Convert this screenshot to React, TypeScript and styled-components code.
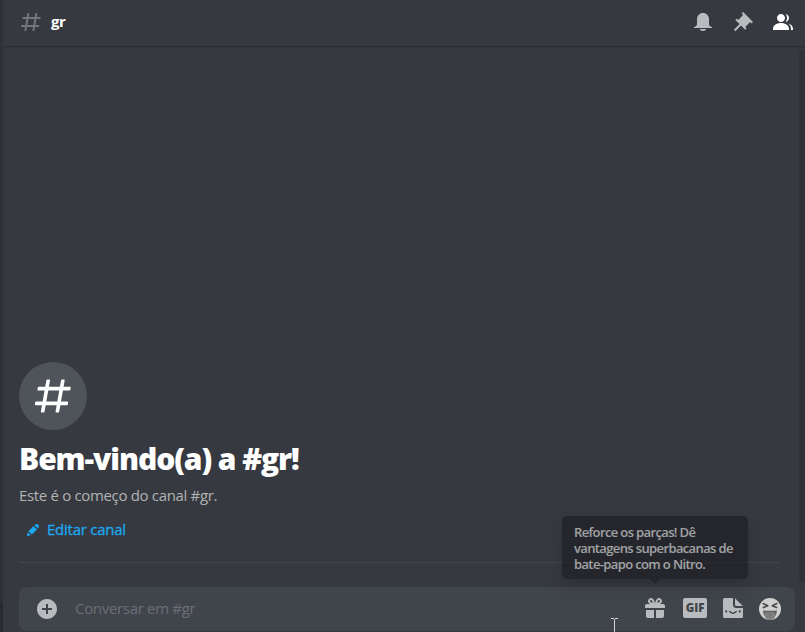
import React from "react";
import styled, { createGlobalStyle } from "styled-components";

const GlobalStyle = createGlobalStyle`
  * { box-sizing: border-box; }
  html, body, #root { height: 100%; margin: 0; }
  body { overflow: hidden; background: #36393f; font-family: "Open Sans", "Noto Sans", sans-serif; }
`;

const Window = styled.div`
  display: grid;
  grid-template-columns: 3px 1fr;
  width: 805px;
  height: 632px;
  overflow: hidden;
`;

const Sidebar = styled.aside`
  display: grid;
  grid-template-rows: 602px 1fr;
  background: #2f3136;
`;

const UserPanel = styled.div`
  grid-row: 2;
  background: #292b2f;
`;

const Channel = styled.main`
  display: flex;
  flex-direction: column;
  min-width: 0;
  background: #36393f;
`;

const Header = styled.header`
  display: flex;
  align-items: center;
  flex: 0 0 48px;
  padding: 0 10px 4px 16px;
  border-bottom: 1px solid #33363b;
  box-shadow: inset 0 -1px 0 #2b2d31;
`;

const ChannelName = styled.h1`
  flex: 1;
  margin: -2px 0 0 8px;
  color: #fff;
  font-size: 15px;
  line-height: 20px;
  font-weight: 700;
  letter-spacing: -0.4px;
`;

const Toolbar = styled.div`
  display: flex;
  gap: 16px;
`;

const Icon = styled.svg<{ $size?: number; $color?: string }>`
  display: block;
  flex: none;
  width: ${(p) => p.$size ?? 24}px;
  height: ${(p) => p.$size ?? 24}px;
  color: ${(p) => p.$color ?? "#b9bbbe"};
  fill: currentColor;
`;

const Body = styled.section`
  display: grid;
  grid-template-columns: 1fr 6px;
  height: 539px;
  flex: none;
`;

const ScrollTrack = styled.div`
  height: 533px;
  margin-top: 2px;
  border-radius: 4px 0 0 4px;
  background: #2f3237;
`;

const Welcome = styled.div`
  display: flex;
  flex-direction: column;
  justify-content: flex-end;
  align-items: flex-start;
  margin: 0 20px 24px 16px;
  border-bottom: 1px solid #42454a;
`;

const HashBadge = styled.div`
  display: grid;
  place-items: center;
  width: 68px;
  height: 68px;
  border-radius: 50%;
  background: #4f545a;
`;

const Title = styled.h2`
  margin: 9px 0 0;
  height: 40px;
  color: #fff;
  font-size: 30px;
  line-height: 40px;
  font-weight: 800;
  letter-spacing: -1.08px;
  white-space: nowrap;
`;

const Description = styled.p`
  margin: 6px 0 0;
  height: 20px;
  color: #b2b3b5;
  font-size: 15px;
  line-height: 20px;
  letter-spacing: -0.33px;
  white-space: nowrap;
`;

const EditButton = styled.button`
  display: flex;
  align-items: center;
  gap: 6px;
  height: 32px;
  margin: 9px 0 16px;
  padding: 0 0 0 6px;
  border: 0;
  background: none;
  color: #1ba8f0;
  font-family: inherit;
  font-size: 15px;
  line-height: 20px;
  font-weight: 500;
  letter-spacing: -0.25px;
`;

const EditLabel = styled.span`
  margin-top: -2px;
  -webkit-text-stroke: 0.3px currentColor;
`;

const Composer = styled.div`
  display: flex;
  align-items: center;
  height: 44px;
  flex: none;
  margin: 0 10px 0 16px;
  padding: 0 14px 0 16px;
  border-radius: 8px;
  background: #40444b;
`;

const Placeholder = styled.div`
  flex: 1;
  margin: -2px 0 0 16px;
  color: #6c6f76;
  font-size: 15px;
  line-height: 20px;
  letter-spacing: -0.32px;
`;

const Actions = styled.div`
  display: flex;
  align-items: center;
  margin-top: -2px;
`;

const GiftSlot = styled.div`
  position: relative;
  margin-right: 16px;
`;

const GifBadge = styled.div`
  width: 24px;
  height: 20px;
  margin-right: 16px;
  border-radius: 2px;
  background: #b9bbbe;
  color: #40444b;
  font-size: 11.5px;
  line-height: 20px;
  font-weight: 800;
  text-align: center;
`;

const StickerSlot = styled.div`
  margin-right: 16px;
`;

const EmojiSlot = styled.div`
  margin-bottom: -2px;
`;

const Tooltip = styled.div`
  position: absolute;
  left: -81px;
  bottom: 41px;
  width: 186px;
  height: 63px;
  padding: 8px 12px 7px;
  border-radius: 5px;
  background: #18191c;
  color: #f0f0f0;
  opacity: 0.57;
  font-size: 13px;
  line-height: 16px;
  font-weight: 600;
  letter-spacing: -0.63px;
  white-space: pre;
  box-shadow: 0 8px 16px rgba(0, 0, 0, 0.24);
  &::after {
    content: "";
    position: absolute;
    top: 100%;
    left: 88px;
    border: 5px solid transparent;
    border-top-color: #18191c;
    border-bottom: 0;
  }
`;

const Cursor = styled.svg`
  position: absolute;
  left: 611px;
  top: 618px;
  width: 7px;
  height: 14px;
`;

const hashPath =
  "M5.88657 21C5.57547 21 5.3399 20.7189 5.39427 20.4126L6.00001 17H2.59511C2.28449 17 2.04905 16.7198 2.10259 16.4138L2.27759 15.4138C2.31946 15.1746 2.52722 15 2.77011 15H6.35001L7.41001 9H4.00511C3.69449 9 3.45905 8.71977 3.51259 8.41381L3.68759 7.41381C3.72946 7.17456 3.93722 7 4.18011 7H7.76001L8.39677 3.41262C8.43914 3.17391 8.64664 3 8.88907 3H9.87344C10.1845 3 10.4201 3.28107 10.3657 3.58738L9.76001 7H15.76L16.3968 3.41262C16.4391 3.17391 16.6466 3 16.8891 3H17.8734C18.1845 3 18.4201 3.28107 18.3657 3.58738L17.76 7H21.1649C21.4755 7 21.711 7.28023 21.6574 7.58619L21.4824 8.58619C21.4406 8.82544 21.2328 9 20.9899 9H17.41L16.35 15H19.7549C20.0655 15 20.301 15.2802 20.2474 15.5862L20.0724 16.5862C20.0306 16.8254 19.8228 17 19.5799 17H16L15.3632 20.5874C15.3209 20.8261 15.1134 21 14.8709 21H13.8866C13.5755 21 13.3399 20.7189 13.3943 20.4126L14 17H8.00001L7.36325 20.5874C7.32088 20.8261 7.11337 21 6.87094 21H5.88657ZM9.41045 9L8.35045 15H14.3504L15.4104 9H9.41045Z";

const HashIcon = ({ size, color }: { size?: number; color: string }) => (
  <Icon viewBox="0 0 24 24" $size={size} $color={color}>
    <path fillRule="evenodd" d={hashPath} />
  </Icon>
);

const BellIcon = () => (
  <Icon viewBox="0 0 24 24">
    <path d="M18 9V14C18 15.657 19.344 17 21 17V18H3V17C4.656 17 6 15.657 6 14V9C6 5.686 8.686 3 12 3C15.314 3 18 5.686 18 9ZM11.9999 21C10.5239 21 9.24793 20.19 8.55493 19H15.4449C14.7519 20.19 13.4759 21 11.9999 21Z" />
  </Icon>
);

const PinIcon = () => (
  <Icon viewBox="0 0 24 24">
    <path d="M22 12L12.101 2.10101L10.686 3.51401L12.101 4.92901L7.15096 9.87801V9.88001L5.73596 8.46501L4.32196 9.88001L8.56496 14.122L2.90796 19.778L4.32196 21.192L9.97896 15.536L14.222 19.778L15.636 18.364L14.222 16.95L19.171 12H19.172L20.586 13.414L22 12Z" />
  </Icon>
);

const MembersIcon = () => (
  <Icon viewBox="0 0 24 24" $color="#fff">
    <path d="M14 8.00598C14 10.211 12.206 12.006 10 12.006C7.795 12.006 6 10.211 6 8.00598C6 5.80098 7.794 4.00598 10 4.00598C12.206 4.00598 14 5.80098 14 8.00598ZM2 19.006C2 15.473 5.29 13.006 10 13.006C14.711 13.006 18 15.473 18 19.006V20.006H2V19.006Z" />
    <path d="M20.0001 20.006H22.0001V19.006C22.0001 16.4433 20.2697 14.4415 17.5213 13.5352C19.0621 14.9127 20.0001 16.8059 20.0001 19.006V20.006Z" />
    <path d="M14.8834 11.9077C16.6657 11.5044 18.0001 9.9077 18.0001 8.00598C18.0001 5.96916 16.4693 4.28218 14.4971 4.0367C15.4322 5.09511 16.0001 6.48524 16.0001 8.00598C16.0001 9.44888 15.4889 10.7742 14.6378 11.8102C14.7203 11.8418 14.8022 11.8743 14.8834 11.9077Z" />
  </Icon>
);

const PencilIcon = () => (
  <Icon viewBox="0 0 24 24" $size={16} $color="#1ba8f0">
    <path d="M19.2929 9.8299L19.9409 9.18278C21.353 7.77064 21.353 5.47197 19.9409 4.05892C18.5287 2.64678 16.2292 2.64678 14.817 4.05892L14.1699 4.70694L19.2929 9.8299ZM12.8962 5.97688L5.18469 13.6906L10.3085 18.813L18.0201 11.0992L12.8962 5.97688ZM4.11851 20.9704L8.75906 19.8112L4.18692 15.239L3.02678 19.8796C2.95028 20.1856 3.04028 20.5105 3.26349 20.7337C3.48669 20.9569 3.8116 21.046 4.11851 20.9704Z" />
  </Icon>
);

const PlusIcon = () => (
  <Icon viewBox="0 0 24 24">
    <path d="M12 2.00098C6.486 2.00098 2 6.48698 2 12.001C2 17.515 6.486 22.001 12 22.001C17.514 22.001 22 17.515 22 12.001C22 6.48698 17.514 2.00098 12 2.00098ZM17 13.001H13V17.001H11V13.001H7V11.001H11V7.00098H13V11.001H17V13.001Z" />
  </Icon>
);

const GiftIcon = () => (
  <Icon viewBox="0 0 24 24">
    <path
      fillRule="evenodd"
      d="M16.886 7.999H20C21.104 7.999 22 8.896 22 9.999V11.999H2V9.999C2 8.896 2.897 7.999 4 7.999H7.114C6.663 7.764 6.236 7.477 5.879 7.121C4.709 5.951 4.709 4.048 5.879 2.879C7.012 1.746 8.986 1.746 10.121 2.877C11.758 4.514 11.979 7.595 11.998 7.941L11.99 7.999H12.01L12.002 7.941C12.022 7.594 12.242 4.514 13.879 2.877C15.014 1.745 16.986 1.746 18.121 2.877C19.29 4.049 19.29 5.952 18.121 7.121C17.764 7.477 17.337 7.764 16.886 7.999ZM7.293 5.707C6.903 5.316 6.903 4.682 7.293 4.292C7.481 4.103 7.732 4 8 4C8.268 4 8.519 4.103 8.707 4.292C9.297 4.882 9.641 5.94 9.825 6.822C8.945 6.639 7.879 6.293 7.293 5.707ZM14.174 6.824C14.359 5.941 14.702 4.883 15.293 4.293C15.481 4.103 15.732 4 16 4C16.268 4 16.519 4.103 16.706 4.291C17.096 4.682 17.097 5.316 16.707 5.707C16.116 6.298 15.057 6.642 14.174 6.824ZM3 13.999V19.999C3 21.102 3.897 21.999 5 21.999H11V13.999H3ZM13 13.999V21.999H19C20.104 21.999 21 21.102 21 19.999V13.999H13Z"
    />
  </Icon>
);

const StickerIcon = () => (
  <Icon viewBox="0 0 20 20" $size={20}>
    <path d="M1.5 0H10V6.5Q10 10 13.5 10H20V18.5Q20 20 18.5 20H1.5Q0 20 0 18.5V1.5Q0 0 1.5 0Z" />
    <path d="M12 0.2L19.8 8H13.6Q12 8 12 6.4Z" />
    <circle cx="3.2" cy="13.4" r="1.1" fill="#40444b" />
    <circle cx="16.8" cy="13.4" r="1.1" fill="#40444b" />
    <path d="M6.5 13Q7.4 15.2 10 15.2Q12.6 15.2 13.5 13" fill="none" stroke="#40444b" strokeWidth="1.5" />
  </Icon>
);

const EmojiIcon = () => (
  <Icon viewBox="0 0 22 22" $size={22}>
    <circle cx="11" cy="11" r="11" fill="#d0d0d0" />
    <path d="M4 12.4Q11 13.2 18 12.4Q17.6 17 15.5 18.6H6.5Q4.4 17 4 12.4Z" fill="#606164" />
    <path d="M6 14.6Q11 13.2 16 14.6V18.6Q15.4 22 11 22Q6.6 22 6 18.6Z" fill="#808080" />
    <path d="M11 15V18.5" stroke="#666" strokeWidth="0.8" />
    <path d="M3.6 5.2L8.8 7.7L3.8 9.8M18.4 5.2L13.2 7.7L18.2 9.8" fill="none" stroke="#48494c" strokeWidth="1.5" strokeLinejoin="round" />
  </Icon>
);

const tooltipText = "Reforce os parças! Dê\nvantagens superbacanas de\nbate-papo com o Nitro.";

export default function App() {
  return (
    <>
      <GlobalStyle />
      <Window>
        <Sidebar>
          <UserPanel />
        </Sidebar>
        <Channel>
          <Header>
            <HashIcon color="#72767d" />
            <ChannelName>gr</ChannelName>
            <Toolbar>
              <BellIcon />
              <PinIcon />
              <MembersIcon />
            </Toolbar>
          </Header>
          <Body>
            <Welcome>
              <HashBadge>
                <HashIcon size={44} color="#fff" />
              </HashBadge>
              <Title>Bem-vindo(a) a #gr!</Title>
              <Description>Este é o começo do canal #gr.</Description>
              <EditButton>
                <PencilIcon />
                <EditLabel>Editar canal</EditLabel>
              </EditButton>
            </Welcome>
            <ScrollTrack />
          </Body>
          <Composer>
            <PlusIcon />
            <Placeholder>Conversar em #gr</Placeholder>
            <Actions>
              <GiftSlot>
                <GiftIcon />
                <Tooltip>{tooltipText}</Tooltip>
              </GiftSlot>
              <GifBadge>GIF</GifBadge>
              <StickerSlot>
                <StickerIcon />
              </StickerSlot>
              <EmojiSlot>
                <EmojiIcon />
              </EmojiSlot>
            </Actions>
          </Composer>
        </Channel>
      </Window>
      <Cursor viewBox="0 0 7 14">
        <path d="M0 .5H3M4 .5H7M3.5 1V14" stroke="#d5d5d5" fill="none" />
      </Cursor>
    </>
  );
}
